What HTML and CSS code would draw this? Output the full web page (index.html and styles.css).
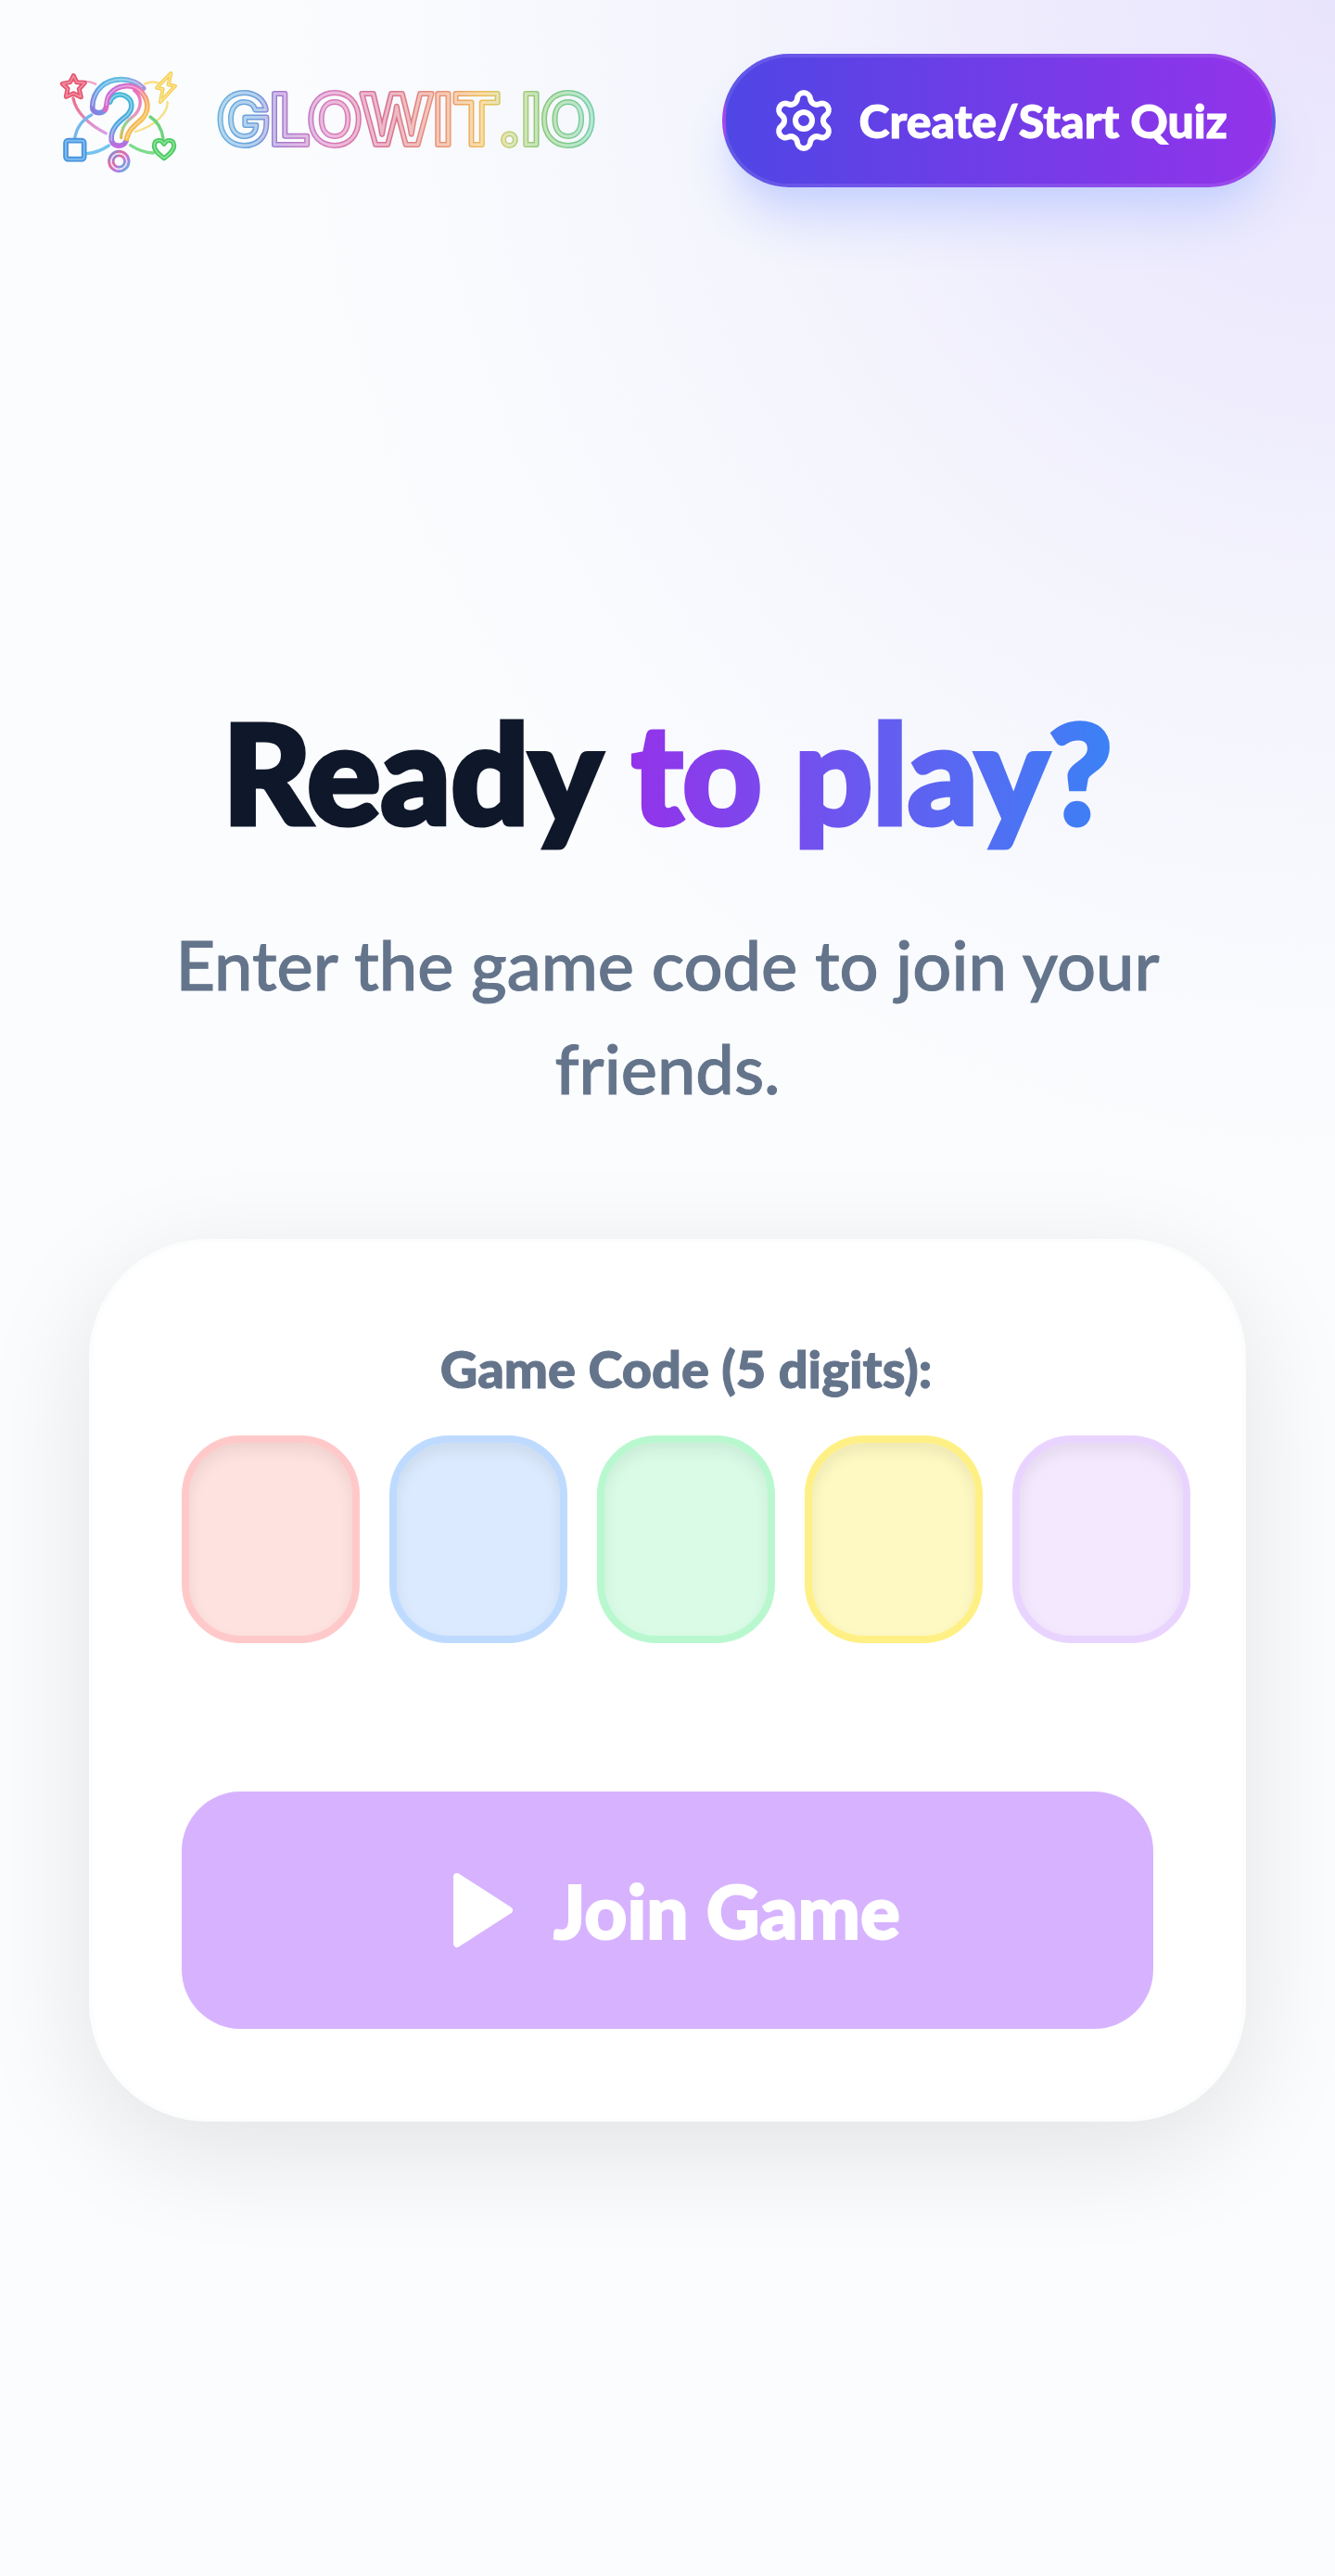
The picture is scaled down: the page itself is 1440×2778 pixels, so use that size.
FILE: index.html
```
<!DOCTYPE html>
<html lang="en">
<head>
    <meta charset="UTF-8">
    <meta name="viewport" content="width=device-width, initial-scale=1.0">
    <title>Glowit.io</title>
    <link rel="stylesheet" href="styles.css">
</head>
<body>
    <header class="header">
        <a class="brand" href="#" aria-label="Glowit.io">
            <svg class="logo" viewBox="42 18 384 384" fill="none" stroke-linecap="round" stroke-linejoin="round" aria-hidden="true">
                <defs>
                    <linearGradient id="hook" gradientUnits="userSpaceOnUse" x1="150" y1="180" x2="320" y2="90">
                        <stop offset="0" stop-color="#8a7be0"/>
                        <stop offset=".3" stop-color="#5aaee6"/>
                        <stop offset=".7" stop-color="#62bfe0"/>
                        <stop offset="1" stop-color="#b58ae0"/>
                    </linearGradient>
                    <linearGradient id="body" gradientUnits="userSpaceOnUse" x1="170" y1="120" x2="310" y2="240">
                        <stop offset="0" stop-color="#b76be0"/>
                        <stop offset=".45" stop-color="#ec6bbd"/>
                        <stop offset=".75" stop-color="#f6a95a"/>
                        <stop offset="1" stop-color="#f7cf3e"/>
                    </linearGradient>
                    <linearGradient id="inner" gradientUnits="userSpaceOnUse" x1="240" y1="120" x2="230" y2="295">
                        <stop offset="0" stop-color="#3fb9d6"/>
                        <stop offset=".6" stop-color="#4ea6e0"/>
                        <stop offset="1" stop-color="#c26be0"/>
                    </linearGradient>
                    <linearGradient id="thread" gradientUnits="userSpaceOnUse" x1="290" y1="110" x2="245" y2="270">
                        <stop offset="0" stop-color="#e86fc2"/>
                        <stop offset=".5" stop-color="#e59ac0"/>
                        <stop offset=".7" stop-color="#8fd68c"/>
                        <stop offset="1" stop-color="#e9b64f"/>
                    </linearGradient>
                    <linearGradient id="orbit" gradientUnits="userSpaceOnUse" x1="85" y1="140" x2="195" y2="250">
                        <stop offset="0" stop-color="#ee6f88"/>
                        <stop offset="1" stop-color="#d9a0ea"/>
                    </linearGradient>
                    <linearGradient id="ring" x1="0" y1="0" x2="1" y2="1">
                        <stop offset="0" stop-color="#5f9be8"/>
                        <stop offset=".35" stop-color="#e86b9c"/>
                        <stop offset=".65" stop-color="#b878e0"/>
                        <stop offset="1" stop-color="#45c0dc"/>
                    </linearGradient>
                </defs>

                <!-- orbits -->
                <g stroke-width="10">
                    <path stroke="url(#orbit)" d="M87 138C96 184 140 226 193 251"/>
                    <path stroke="#f0a5c6" stroke-width="7" d="M122 84C134 82 148 86 160 92"/>
                    <path stroke="#74b9ee" d="M92 268C97 234 116 208 146 192"/>
                    <path stroke="#74c4ee" d="M130 317C156 315 180 306 202 291"/>
                    <path stroke="#f8df84" stroke-width="7" d="M318 92C334 84 348 84 362 88M392 150C394 184 352 228 288 246"/>
                    <path stroke="#6ed47c" d="M336 198C362 214 374 240 378 268"/>
                    <path stroke="#7edc8c" d="M272 290C294 304 318 314 346 315"/>
                </g>

                <!-- question mark -->
                <g stroke-width="17">
                    <path stroke="url(#thread)" stroke-width="10" d="M284 112C310 132 310 166 286 192C262 212 244 224 242 266"/>
                    <path stroke="url(#hook)" d="M190 175C182 190 148 188 149 166C150 112 190 76 244 77C276 78 300 92 314 106"/>
                    <path stroke="url(#inner)" d="M206 150C212 130 234 120 254 130C282 144 282 174 258 196C232 216 206 240 211 274C216 298 252 296 258 276"/>
                    <path stroke="url(#body)" d="M190 175C198 164 192 142 206 124C230 94 274 90 302 112C334 142 334 180 308 206C286 226 266 240 260 268"/>
                </g>
                <g stroke="#fff" stroke-opacity=".4" stroke-width="5">
                    <path d="M149 162C154 112 190 77 244 77C276 78 296 88 308 100"/>
                    <path d="M206 150C212 130 234 120 254 130C282 144 282 174 258 196C232 216 206 240 211 274"/>
                    <path d="M194 160C194 142 198 132 206 124C230 94 274 90 302 112C334 142 334 180 308 206C286 226 266 240 260 268"/>
                </g>
                <circle cx="235" cy="342" r="32" stroke="url(#ring)" stroke-width="9"/>
                <circle cx="235" cy="342" r="19" stroke="url(#ring)" stroke-width="9"/>
                <circle cx="235" cy="342" r="25" stroke="#f0d8f4" stroke-width="4"/>

                <!-- star, bolt, square, heart -->
                <path stroke="#e2536f" stroke-width="15" d="M88 65L98 86L124 88L106 108L112 134L88 122L64 133L69 107L52 91L77 86Z"/>
                <path stroke="#f58ea0" stroke-width="5" d="M88 65L98 86L124 88L106 108L112 134L88 122L64 133L69 107L52 91L77 86Z"/>
                <path stroke="#f4cf58" stroke-width="12" d="M403 57L357 104L377 108L369 150L417 98L395 94Z"/>
                <path stroke="#fbe795" stroke-width="4" d="M403 57L357 104L377 108L369 150L417 98L395 94Z"/>
                <rect x="63" y="275" width="59" height="60" rx="7" stroke="#4a94dc" stroke-width="17"/>
                <rect x="63" y="275" width="59" height="60" rx="7" stroke="#7dbcf2" stroke-width="6"/>
                <path stroke="#4cc862" stroke-width="15" d="M381 332C362 318 348 306 349 290C351 270 373 270 381 286C389 270 411 270 413 290C414 306 400 318 381 332Z"/>
                <path stroke="#8be596" stroke-width="5" d="M381 332C362 318 348 306 349 290C351 270 373 270 381 286C389 270 411 270 413 290C414 306 400 318 381 332Z"/>
            </svg>
            <svg class="wordmark" viewBox="0 0 424 112" aria-hidden="true">
                <defs>
                    <linearGradient id="neon" gradientUnits="userSpaceOnUse" x1="4" y1="0" x2="420" y2="0">
                        <stop offset="0" stop-color="#68b4de"/>
                        <stop offset=".11" stop-color="#6a9fdc"/>
                        <stop offset=".17" stop-color="#a578d0"/>
                        <stop offset=".3" stop-color="#d878bc"/>
                        <stop offset=".45" stop-color="#d8708f"/>
                        <stop offset=".6" stop-color="#ea9470"/>
                        <stop offset=".7" stop-color="#efbe54"/>
                        <stop offset=".77" stop-color="#bccf74"/>
                        <stop offset=".86" stop-color="#84c878"/>
                        <stop offset="1" stop-color="#70ceac"/>
                    </linearGradient>
                </defs>
                <text class="neon-edge" x="212" y="82">GLOWIT.IO</text>
                <text class="neon-core" x="212" y="82">GLOWIT.IO</text>
            </svg>
        </a>
        <button class="create" type="button">
            <svg class="create-icon" viewBox="0 0 24 24" fill="none" stroke="currentColor" stroke-width="2" stroke-linecap="round" stroke-linejoin="round" aria-hidden="true">
                <path d="M9.671 4.136a2.34 2.34 0 0 1 4.659 0 2.34 2.34 0 0 0 3.319 1.915 2.34 2.34 0 0 1 2.33 4.033 2.34 2.34 0 0 0 0 3.831 2.34 2.34 0 0 1-2.33 4.033 2.34 2.34 0 0 0-3.319 1.915 2.34 2.34 0 0 1-4.659 0 2.34 2.34 0 0 0-3.32-1.915 2.34 2.34 0 0 1-2.33-4.033 2.34 2.34 0 0 0 0-3.831A2.34 2.34 0 0 1 6.35 6.051a2.34 2.34 0 0 0 3.319-1.915"/>
                <circle cx="12" cy="12" r="3"/>
            </svg>
            Create/Start Quiz
        </button>
    </header>

    <main class="main">
        <h1>Ready <span class="accent">to play?</span></h1>
        <p class="intro">Enter the game code to join your friends.</p>

        <form class="card">
            <fieldset class="code">
                <legend>Game Code (5 digits):</legend>
                <div class="digits">
                    <input class="digit red" type="text" inputmode="numeric" maxlength="1" aria-label="Digit 1">
                    <input class="digit blue" type="text" inputmode="numeric" maxlength="1" aria-label="Digit 2">
                    <input class="digit green" type="text" inputmode="numeric" maxlength="1" aria-label="Digit 3">
                    <input class="digit yellow" type="text" inputmode="numeric" maxlength="1" aria-label="Digit 4">
                    <input class="digit purple" type="text" inputmode="numeric" maxlength="1" aria-label="Digit 5">
                </div>
            </fieldset>
            <button class="join" type="submit" disabled>
                <svg class="join-icon" viewBox="0 0 24 24" fill="currentColor" stroke="currentColor" stroke-width="2" stroke-linejoin="round" aria-hidden="true">
                    <path d="M6 3L20 12L6 21Z"/>
                </svg>
                Join Game
            </button>
        </form>
    </main>
</body>
</html>
```
FILE: styles.css
```
* { box-sizing: border-box; }
body { margin: 0; min-height: 100vh; font-family: Lato, "Open Sans", sans-serif; color: #0f172a; background: radial-gradient(ellipse 1120px 1240px at 100% 0, #e9e4fd 0%, #efedfd 35%, #f5f6fd 62%, #fafcfe 100%) no-repeat #fafcfe; }
button, input { font-family: inherit; }

.header { display: flex; align-items: center; justify-content: space-between; padding: 58px 64px; }
.brand { display: flex; align-items: center; gap: 34px; }
.logo { width: 128px; height: 128px; }
.wordmark { width: 424px; height: 112px; }
.wordmark text { font-family: Inter, sans-serif; font-weight: 700; font-size: 76px; text-anchor: middle; fill: none; stroke-linejoin: round; }
.neon-edge { stroke: url(#neon); stroke-width: 6px; }
.neon-core { stroke: #fff; stroke-opacity: .5; stroke-width: 3px; }

.create { display: flex; align-items: center; gap: 24px; height: 144px; padding: 0 48px; border: 4px solid rgba(255, 255, 255, 0.1); border-radius: 72px; background: linear-gradient(to right, #4f46e5, #9333ea); box-shadow: 0 40px 60px -12px #c7d2fe, 0 16px 24px -16px #c7d2fe; color: #fff; font-size: 50px; font-weight: 900; white-space: nowrap; -webkit-text-stroke: 1px currentColor; }
.create-icon { width: 72px; height: 72px; }

.main { padding: 492px 96px 64px; text-align: center; }
h1 { margin: 0 0 72px; font-size: 148px; line-height: 160px; font-weight: 900; -webkit-text-stroke: 5px #0f172a; }
.accent { background: linear-gradient(to right, #9333ea, #3b82f6); -webkit-background-clip: text; background-clip: text; color: transparent; -webkit-text-stroke: 5px transparent; }
.intro { max-width: 1120px; margin: 0 auto 128px; color: #64748b; font-size: 74px; line-height: 112px; font-weight: 500; -webkit-text-stroke: 1px currentColor; }

.card { padding: 96px; border: 4px solid #fcfdfd; border-radius: 128px; background: #fff; box-shadow: 0 32px 120px rgba(0, 0, 0, 0.1); }
.code { width: max-content; margin: 0 0 160px; padding: 0; border: 0; }
.code legend { width: 100%; margin-bottom: 32px; padding: 0; color: #64748b; font-size: 56px; line-height: 80px; font-weight: 900; -webkit-text-stroke: 1px currentColor; }
.digits { display: flex; gap: 32px; }
.digit { width: 192px; height: 224px; padding: 0; border: 8px solid; border-radius: 64px; box-shadow: inset 0 8px 16px rgba(0, 0, 0, 0.07); color: #0f172a; font-size: 96px; font-weight: 900; text-align: center; }
.red { border-color: #ffc9c9; background: #fee2df; }
.blue { border-color: #bedbff; background: #dbeafe; }
.green { border-color: #b9f8cf; background: #dafce7; }
.yellow { border-color: #fff085; background: #fef9c2; }
.purple { border-color: #e9d4ff; background: #f4e8ff; }

.join { display: flex; align-items: center; justify-content: center; gap: 32px; width: 100%; height: 256px; border: 0; border-radius: 64px; background: #d7b3ff; color: #fff; font-size: 80px; font-weight: 900; -webkit-text-stroke: 2px currentColor; }
.join-icon { width: 96px; height: 96px; }
```
